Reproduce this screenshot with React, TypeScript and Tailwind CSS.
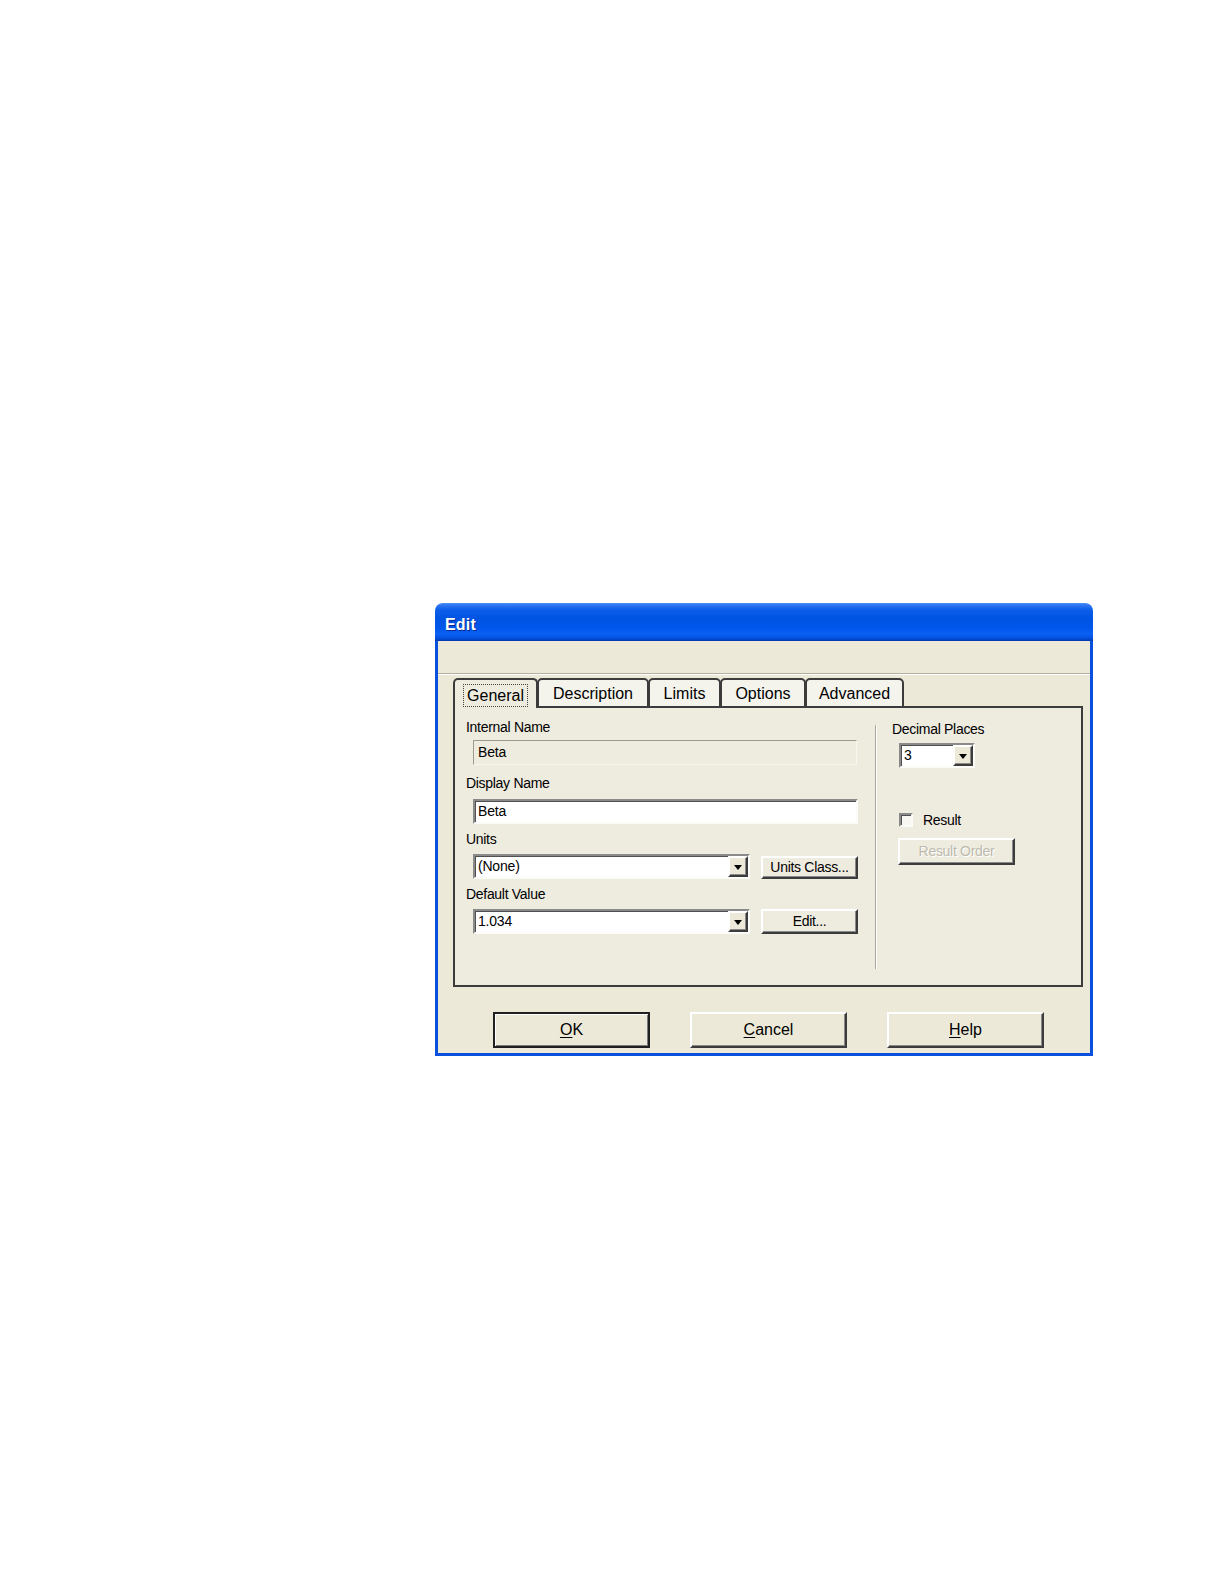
import React from "react";

const sunken =
  "border-2 border-t-[#8a8a8a] border-l-[#8a8a8a] border-r-[#fbfbf8] border-b-[#fbfbf8] shadow-[inset_1px_1px_0_#505050]";
const raised =
  "border-2 border-t-white border-l-white border-r-[#3c3c3c] border-b-[#3c3c3c] shadow-[inset_-1px_-1px_0_#8a8a8a]";

function Label({ children, className = "" }: { children: React.ReactNode; className?: string }) {
  return (
    <div className={"h-[16px] leading-[16px] text-[14px] tracking-[-0.3px] whitespace-nowrap " + className}>
      {children}
    </div>
  );
}

function Arrow() {
  return (
    <div className={"w-[20px] h-full bg-[#ece9d8] flex items-center justify-center " + raised}>
      <div className="w-0 h-0 border-l-[4px] border-r-[4px] border-t-[5px] border-l-transparent border-r-transparent border-t-black mt-[1px]" />
    </div>
  );
}

function Combo({ value, w, h }: { value: string; w: string; h: string }) {
  return (
    <div className={"bg-white flex items-stretch " + w + " " + h + " " + sunken}>
      <div className="flex-1 pl-[3px] text-[14px] tracking-[-0.2px] flex items-center">{value}</div>
      <Arrow />
    </div>
  );
}

function Tab({ label, w, selected = false }: { label: string; w: string; selected?: boolean }) {
  return (
    <div
      className={
        "h-full flex items-center justify-center rounded-t-[5px] border-2 border-[#3c3c3c] text-[16px] whitespace-nowrap -ml-[1px] first:ml-0 " +
        w +
        (selected ? " border-b-0 bg-[#eeebdf] relative z-10" : " bg-[#f4f3ec] pt-[2px]")
      }
    >
      {selected ? (
        <div className="h-[23px] mt-[3px] px-[3px] border border-dotted border-[#444] flex items-center">{label}</div>
      ) : (
        label
      )}
    </div>
  );
}

function BigButton({ children, def = false }: { children: React.ReactNode; def?: boolean }) {
  return (
    <div
      className={
        "w-[157px] h-[36px] flex items-center justify-center text-[16px] bg-[#ece9d8] " +
        (def
          ? "border-2 border-[#202020] shadow-[inset_1px_1px_0_#fff,inset_-1px_-1px_0_#7a7a7a]"
          : raised)
      }
    >
      {children}
    </div>
  );
}

export default function App() {
  return (
    <div className="min-h-[1584px] w-[1224px] bg-white pt-[603px] pl-[435px] font-['Liberation_Sans',Arial,sans-serif] text-black">
      <div className="w-[658px] rounded-t-[8px] overflow-hidden flex flex-col">
        {/* Title bar */}
        <div className="h-[38px] bg-[linear-gradient(180deg,#4a8ef5_0%,#2a74f0_7%,#0c5ee9_18%,#0054e3_40%,#0056ea_65%,#0a60f4_82%,#0350de_93%,#0038a8_100%)] flex items-center pl-[10px] pt-[5px]">
          <span className="text-white font-bold text-[16px] tracking-[0.2px] [text-shadow:1px_1px_0_#0b2a8f]">Edit</span>
        </div>
        {/* Frame */}
        <div className="bg-[#0b4fdd] px-[3px] pb-[3px]">
          <div className="bg-[#ece9d8] h-[412px] flex flex-col">
            <div className="h-[32px]" />
            <div className="h-[2px] border-t border-t-[#b3b0a2] border-b border-b-white" />

            {/* Tabs */}
            <div className="flex items-end ml-[15px] mr-[7px] h-[30px] mt-[3px]">
              <Tab label="General" w="w-[85px]" selected />
              <Tab label="Description" w="w-[112px]" />
              <Tab label="Limits" w="w-[73px]" />
              <Tab label="Options" w="w-[86px]" />
              <Tab label="Advanced" w="w-[99px]" />
              <div className="flex-1 h-full border-b-2 border-[#3c3c3c]" />
            </div>

            {/* Panel */}
            <div className="ml-[15px] mr-[7px] h-[279px] border-l-2 border-r-2 border-b-2 border-[#3c3c3c] bg-[#eeebdf] flex">
              {/* Left column */}
              <div className="w-[420px] flex flex-col pt-[11px]">
                <Label className="pl-[11px]">Internal Name</Label>
                <div className="ml-[18px] mt-[5px] w-[384px] h-[25px] border-t border-l border-t-[#9c9a90] border-l-[#9c9a90] border-b border-r border-b-[#f6f5ef] border-r-[#f6f5ef] pl-[4px] text-[14px] tracking-[-0.2px] flex items-center">
                  Beta
                </div>
                <Label className="pl-[11px] mt-[10px]">Display Name</Label>
                <div className={"ml-[18px] mt-[8px] w-[385px] h-[25px] bg-white pl-[3px] text-[14px] tracking-[-0.2px] flex items-center " + sunken}>
                  Beta
                </div>
                <Label className="pl-[11px] mt-[7px]">Units</Label>
                <div className="ml-[18px] mt-[7px] flex items-end">
                  <Combo value="(None)" w="w-[277px]" h="h-[25px]" />
                  <div className={"ml-[11px] w-[97px] h-[23px] flex items-center justify-center text-[14px] tracking-[-0.3px] " + raised}>
                    Units Class...
                  </div>
                </div>
                <Label className="pl-[11px] mt-[7px]">Default Value</Label>
                <div className="ml-[18px] mt-[7px] flex items-start">
                  <Combo value="1.034" w="w-[277px]" h="h-[25px]" />
                  <div className={"ml-[11px] w-[97px] h-[25px] flex items-center justify-center text-[14px] tracking-[-0.3px] " + raised}>
                    Edit...
                  </div>
                </div>
              </div>

              {/* Separator */}
              <div className="mt-[17px] h-[244px] w-[2px] border-l border-l-[#aca899] border-r border-r-white" />

              {/* Right column */}
              <div className="flex flex-col pt-[13px]">
                <Label className="pl-[15px]">Decimal Places</Label>
                <div className="ml-[22px] mt-[6px]">
                  <Combo value="3" w="w-[76px]" h="h-[25px]" />
                </div>
                <div className="ml-[22px] mt-[45px] flex items-center h-[14px]">
                  <div className={"w-[14px] h-[14px] bg-[#f7f6f1] " + sunken} />
                  <span className="ml-[10px] text-[14px] tracking-[-0.3px]">Result</span>
                </div>
                <div className={"ml-[21px] mt-[11px] w-[117px] h-[27px] flex items-center justify-center text-[14px] tracking-[-0.3px] text-[#bdbaad] [text-shadow:1px_1px_0_#ffffff] " + raised}>
                  Result Order
                </div>
              </div>
            </div>

            {/* Buttons */}
            <div className="mt-[25px] flex pl-[55px] gap-[40px]">
              <BigButton def>
                <span><u className="underline-offset-2">O</u>K</span>
              </BigButton>
              <BigButton>
                <span><u className="underline-offset-2">C</u>ancel</span>
              </BigButton>
              <BigButton>
                <span><u className="underline-offset-2">H</u>elp</span>
              </BigButton>
            </div>
          </div>
        </div>
      </div>
    </div>
  );
}
